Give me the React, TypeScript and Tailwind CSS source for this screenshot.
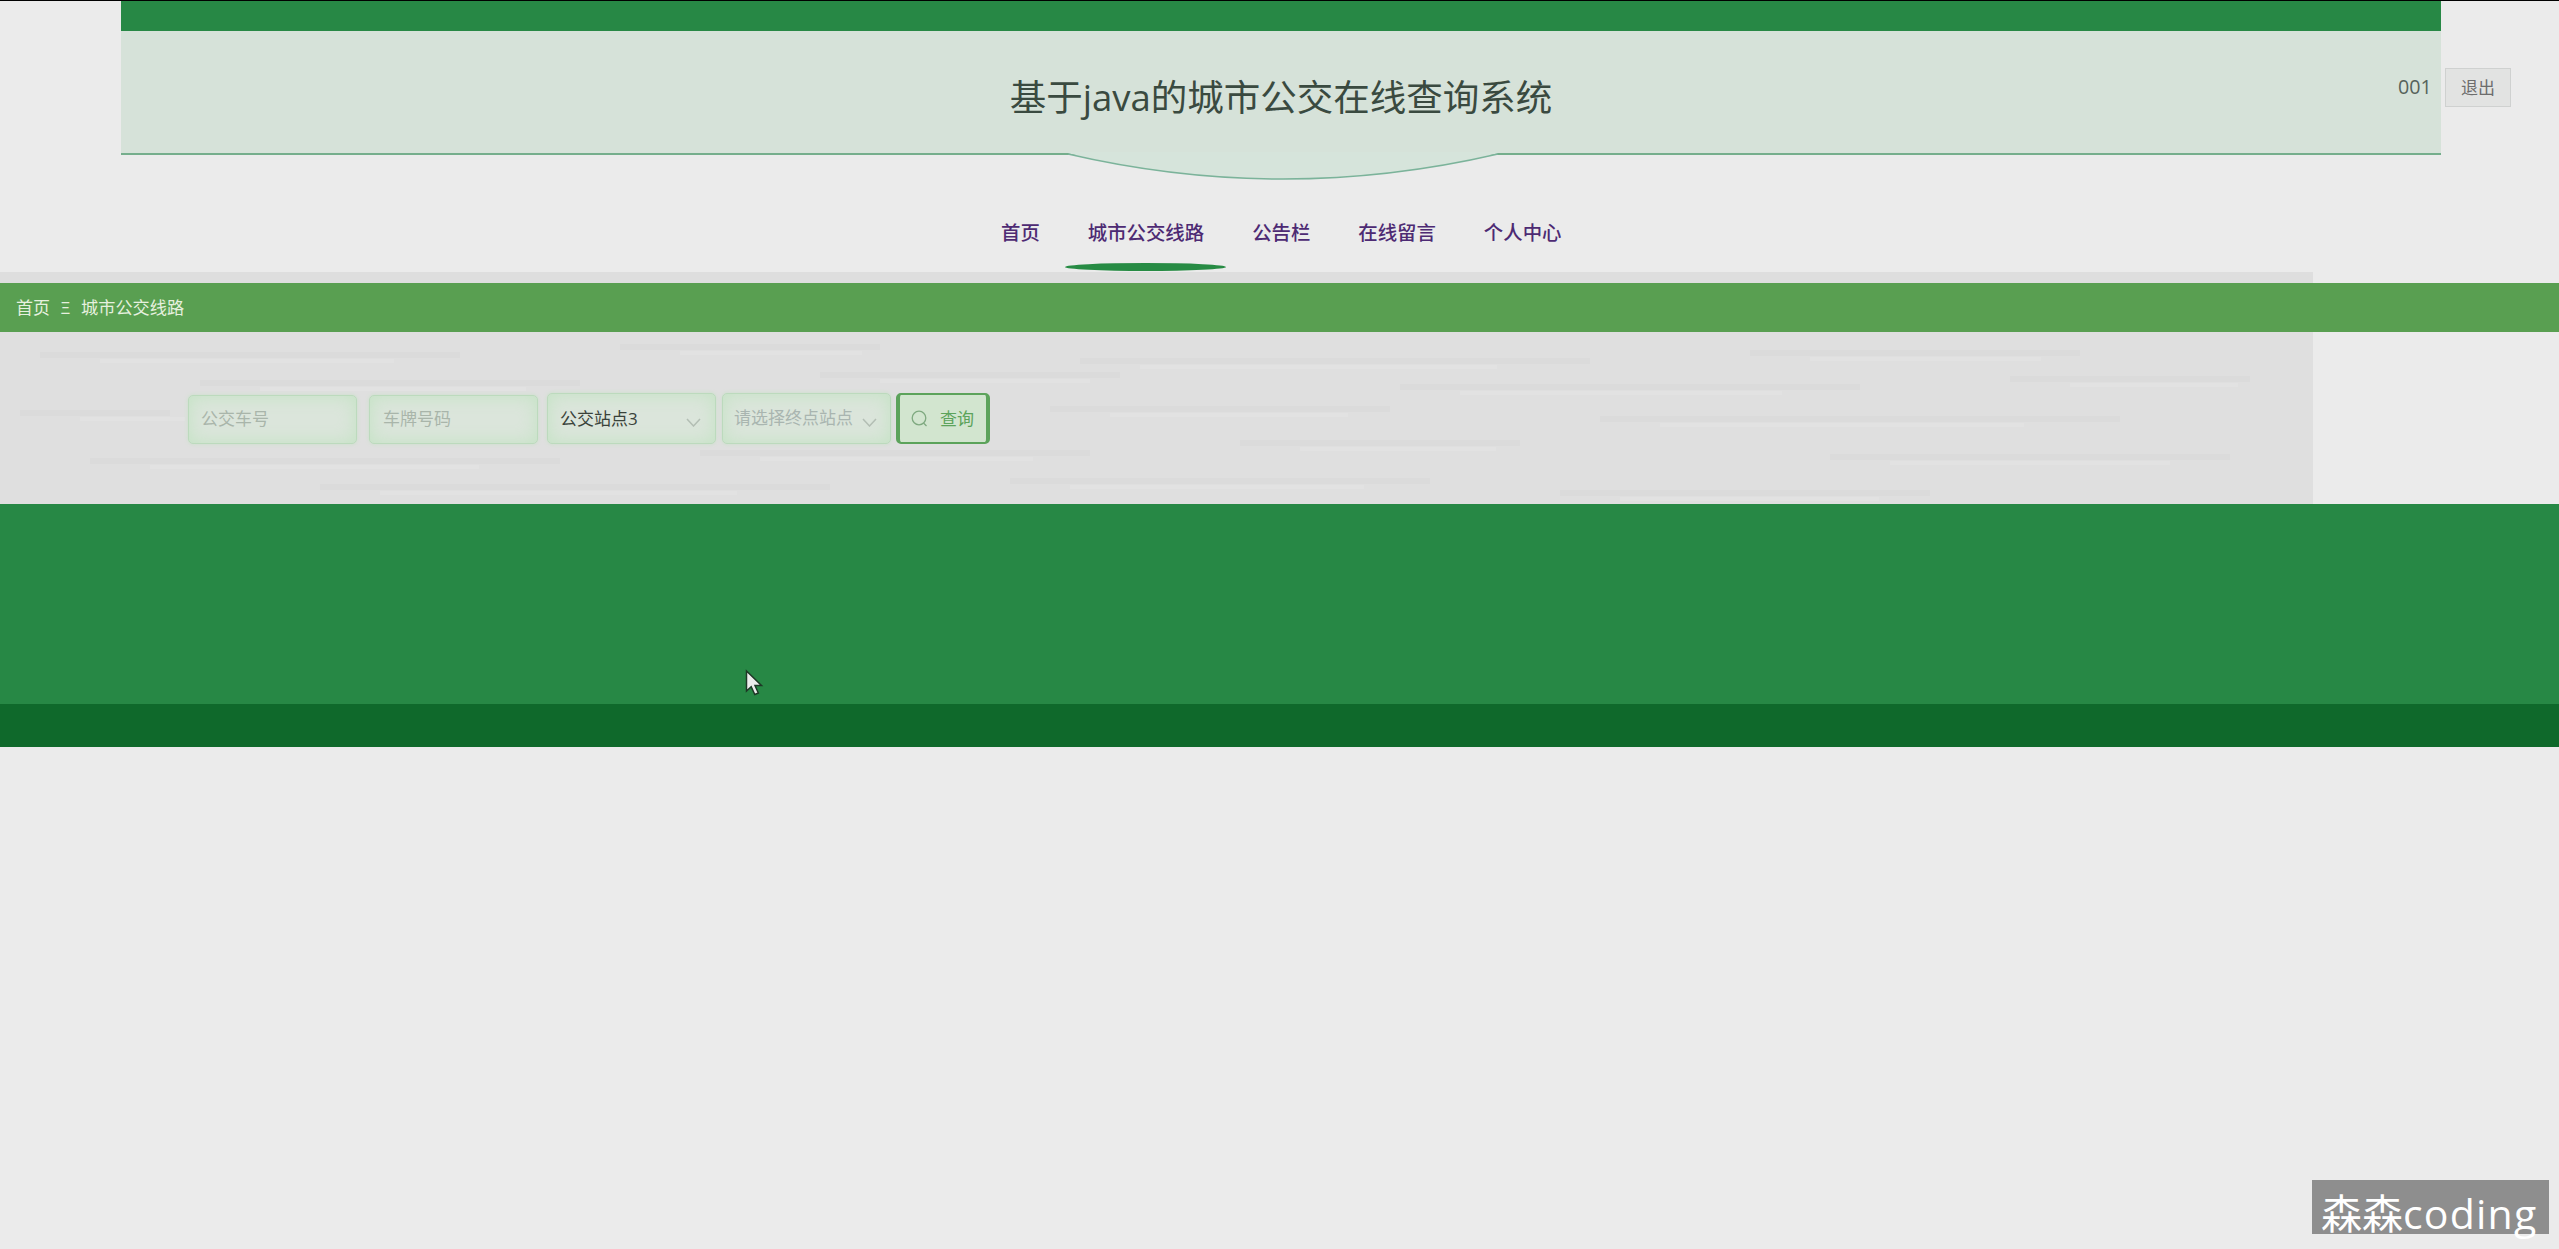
import React from "react";

const navItems = [
  { label: "首页" },
  { label: "城市公交线路", active: true },
  { label: "公告栏" },
  { label: "在线留言" },
  { label: "个人中心" },
];

const fieldBase =
  "flex w-[169px] items-center rounded-[5px] border border-[#bcdabd] bg-[#dbe5db] text-[17px] leading-[24px] shadow-[inset_0_0_18px_#c3e3c3,0_0_4px_#c9e2c9]";

const streaks = [
  [40, 20, 420], [620, 12, 260], [1080, 26, 510], [1750, 18, 330], [200, 48, 380], [820, 40, 300],
  [1400, 52, 460], [2010, 44, 240], [20, 78, 150], [1050, 74, 340], [1600, 84, 520], [90, 126, 470],
  [700, 118, 390], [1240, 108, 280], [1830, 122, 400], [320, 152, 510], [1010, 146, 420], [1560, 158, 370],
];

function Chevron() {
  return (
    <svg className="mt-[7px] h-[9px] w-[15px] shrink-0" viewBox="0 0 15 9" fill="none" stroke="#b3beb4" strokeWidth="1.5">
      <path d="M1 1 L7.5 8 L14 1" />
    </svg>
  );
}

function Header() {
  return (
    <header className="relative mr-[118px] ml-[121px] h-[154px]">
      <div className="h-[30px] bg-[#278845]" />
      <div className="flex h-[124px] items-center justify-center border-b-2 border-[#75ae8c] bg-[#d6e2d9]">
        <h1 className="mt-[9px] text-[36.5px] leading-[48px] whitespace-nowrap text-[#3a4a40]">
          基于java的城市公交在线查询系统
        </h1>
      </div>
      <svg className="absolute top-[151px] left-[946px] h-[30px] w-[432px]" viewBox="0 0 432 30">
        <path d="M0 0 H432 L430 1.500 Q216 53 2 1.500 Z" fill="#d6e4db" />
        <path d="M1 2 Q216 52 431 2" fill="none" stroke="#7bb39a" strokeWidth="1.500" />
      </svg>
      <div className="absolute top-[67px] left-[2277px] flex items-center">
        <span className="-mt-[2px] w-[47px] text-[19.7px] leading-[38px] text-[#56625b]">001</span>
        <button className="h-[39px] w-[66px] border border-[#cfd1d0] bg-[#e2e3e2] text-[17px] text-[#6d6d6d]">退出</button>
      </div>
    </header>
  );
}

function Nav() {
  return (
    <nav className="flex h-[117px] pt-[58px] pl-[977px]">
      {navItems.map((item) => (
        <div key={item.label} className="flex h-[58px] flex-col justify-between px-[24px]">
          <span className="mt-[6px] text-[19.4px] leading-[28px] font-medium whitespace-nowrap text-[#4d2a73]">{item.label}</span>
          {item.active && <span className="-mr-[22px] -ml-[23px] h-[8px] rounded-[50%] bg-[#278b44]" />}
        </div>
      ))}
    </nav>
  );
}

export default function App() {
  return (
    <div className="relative h-[1249px] w-[2559px] overflow-hidden border-t border-black bg-[#ebebeb] font-['Open_Sans','Noto_Sans_CJK_SC',sans-serif]">
      <Header />
      <Nav />
      <div className="h-[11px] w-[2313px] bg-[#dedede]" />
      <div className="flex h-[49px] items-center bg-[#599f51] pl-[16px] text-[17px] text-[#e6f0df]">
        <span>首页</span>
        <span className="w-[31px] text-center text-[17px]">Ξ</span>
        <span className="text-[17.2px]">城市公交线路</span>
      </div>
      <main className="relative h-[172px] w-[2313px] bg-[#dfdfdf] pt-[61px] pl-[188px]">
        <svg className="absolute inset-0 h-full w-full" viewBox="0 0 2313 172">
          {streaks.map(([x, y, w]) => (
            <g key={`${x}-${y}`}>
              <rect x={x} y={y} width={w} height="6" fill="#dbdbdb" />
              <rect x={x + 60} y={y + 7} width={w * 0.7} height="4" fill="#e2e2e2" />
            </g>
          ))}
        </svg>
        <form className="relative flex items-start">
          <div className={`${fieldBase} mt-[2px] mr-[12px] h-[49px] pb-[2px] pl-[12px] text-[#a9b5aa]`}>公交车号</div>
          <div className={`${fieldBase} mt-[2px] mr-[9px] h-[49px] pb-[2px] pl-[13px] text-[#a9b5aa]`}>车牌号码</div>
          <div className={`${fieldBase} mr-[6px] h-[51px] justify-between pr-[14px] pl-[12px] text-[#39423a]`}>
            <span>公交站点3</span>
            <Chevron />
          </div>
          <div className={`${fieldBase} mr-[5px] h-[51px] justify-between pr-[13px] pl-[11px] text-[#a9b5b0]`}>
            <span className="-mt-[2px] whitespace-nowrap">请选择终点站点</span>
            <Chevron />
          </div>
          <button type="button" className="flex h-[51px] w-[94px] items-center rounded-[5px] border-x-4 border-y-2 border-[#5ca35b] bg-[#d2e5cf] pl-[11px] text-[17px] text-[#5ca35b]">
            <svg className="mr-[12px] h-[17px] w-[17px]" viewBox="0 0 17 17" fill="none" stroke="#7fa980" strokeWidth="1.300">
              <circle cx="8" cy="8" r="6.800" />
              <path d="M12.500 13 L15.500 16" />
            </svg>
            查询
          </button>
        </form>
      </main>
      <footer>
        <div className="h-[200px] bg-[#278845]" />
        <div className="h-[43px] bg-[#0f692b]" />
      </footer>
      <svg className="absolute top-[668px] left-[745px] h-[28px] w-[19px]" viewBox="0 0 19 28">
        <path d="M1.500 2 V22 L6.200 17.800 L9.800 25.500 L13.300 24 L10 16.500 H16.500 Z" fill="#ececec" stroke="#1d3826" strokeWidth="1.500" />
      </svg>
      <div className="absolute top-[1179px] left-[2312px] h-[54px] w-[237px] bg-[#8e8e8e] pl-[9px] text-[41px] leading-[67px] whitespace-nowrap text-white">
        森森<span className="tracking-[1.2px]">coding</span>
      </div>
    </div>
  );
}
